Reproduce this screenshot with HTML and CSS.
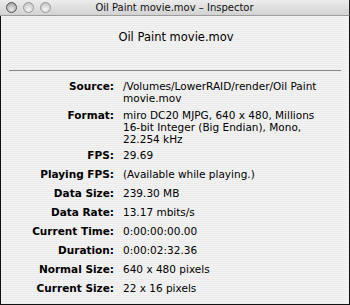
FILE: index.html
```html
<!DOCTYPE html>
<html lang="en">
<head>
    <meta charset="UTF-8">
    <title>Oil Paint movie.mov - Inspector</title>
    <link rel="stylesheet" href="styles.css">
</head>
<body>
    <div class="window">
        <div class="title-bar">
            <div class="lights">
                <span class="light light-close"></span>
                <span class="light"></span>
                <span class="light"></span>
            </div>
            <div class="title-text">Oil Paint movie.mov &ndash; Inspector</div>
        </div>

        <div class="content">
            <h1 class="movie-name">Oil Paint movie.mov</h1>
            <div class="separator"></div>

            <div class="info-grid">
                <div class="label tight">Source:</div>
                <div class="value tight">/Volumes/LowerRAID/render/Oil Paint movie.mov</div>
                <div class="label tight">Format:</div>
                <div class="value tight">miro DC20 MJPG, 640 x 480, Millions <span class="nowrap">16-bit</span> Integer (Big Endian), Mono, <span class="nowrap">22.254 kHz</span></div>
                <div class="label">FPS:</div>
                <div class="value">29.69</div>
                <div class="label">Playing FPS:</div>
                <div class="value">(Available while playing.)</div>
                <div class="label">Data Size:</div>
                <div class="value">239.30 MB</div>
                <div class="label">Data Rate:</div>
                <div class="value">13.17 mbits/s</div>
                <div class="label">Current Time:</div>
                <div class="value">0:00:00:00.00</div>
                <div class="label">Duration:</div>
                <div class="value">0:00:02:32.36</div>
                <div class="label">Normal Size:</div>
                <div class="value">640 x 480 pixels</div>
                <div class="label">Current Size:</div>
                <div class="value">22 x 16 pixels</div>
            </div>
        </div>
    </div>
</body>
</html>
```

FILE: styles.css
```css
* {
    margin: 0;
    padding: 0;
    box-sizing: border-box;
}

body {
    font-family: "DejaVu Sans", "Lucida Grande", sans-serif;
    color: #000;
    background: #fff;
}

.window {
    width: 350px;
    height: 305px;
    display: flex;
    flex-direction: column;
    overflow: hidden;
}

/* small utility-style title bar */
.title-bar {
    height: 16px;
    flex-shrink: 0;
    position: relative;
    background: linear-gradient(#ececec, #d2d2d2);
    border-bottom: 1px solid #9c9c9c;
    border-right: 1px solid #222;
}

.lights {
    position: absolute;
    top: 2px;
    left: 6px;
    display: flex;
    gap: 6px;
}

.light {
    width: 11px;
    height: 11px;
    border-radius: 50%;
    border: 1px solid #9a9a9a;
    background: radial-gradient(circle at 50% 70%, #f4f4f4 0, #d6d6d6 55%, #b8b8b8 100%);
}

.light-close {
    border-color: #555;
    background: radial-gradient(circle at 50% 70%, #e8e8e8 0, #bcbcbc 55%, #8c8c8c 100%);
}

.title-text {
    text-align: center;
    font-size: 10px;
    line-height: 15px;
    color: #111;
}

.content {
    flex: 1;
    border-left: 1px solid #111;
    border-right: 1px solid #111;
    border-bottom: 1px solid #111;
    background: repeating-linear-gradient(#f3f3f3 0, #f3f3f3 1px, #ebebeb 1px, #ebebeb 2px);
    padding: 0 8px;
}

.movie-name {
    font-size: 11.5px;
    font-weight: normal;
    text-align: center;
    line-height: 16px;
    margin-top: 13px;
    padding-left: 2px;
}

.separator {
    height: 1px;
    background: #8a8a8a;
    margin-top: 25px;
}

.info-grid {
    display: grid;
    grid-template-columns: 105px 212px;
    column-gap: 9px;
    row-gap: 7px;
    font-size: 10.5px;
    line-height: 12px;
    margin-top: 9px;
}

/* wrapped rows sit a little closer to the next one */
.tight {
    margin-bottom: -2.5px;
}

.label {
    font-weight: bold;
    text-align: right;
}

.nowrap {
    white-space: nowrap;
}
```
